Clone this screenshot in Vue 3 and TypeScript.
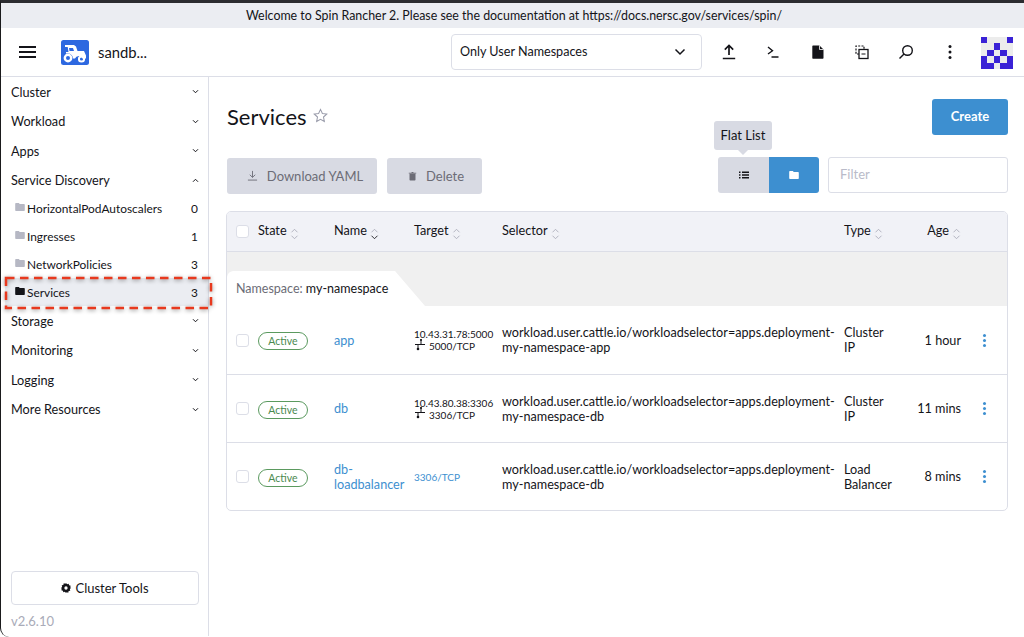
<template>
  <div class="page">
    <div class="banner">Welcome to Spin Rancher 2. Please see the documentation at https://docs.nersc.gov/services/spin/</div>

    <header class="topbar">
      <button class="burger" aria-label="Menu"><span></span><span></span><span></span></button>
      <svg class="cluster-logo" viewBox="0 0 28 25" width="28" height="25">
        <rect width="28" height="25" rx="2.5" fill="#2d68e0" />
        <path d="M4 5h9l2 1.5 1.5 4.5h6.5l2 4.5v3h-3.500a4 4 0 0 0-7.500 0h-2a5.500 5.500 0 0 0-7-5V12h2.500l-.8-5H4z" fill="#fff" />
        <path d="M8 8l.5 3h4.500l-1-3z" fill="#2d68e0" />
        <circle cx="7" cy="18" r="3.200" fill="none" stroke="#fff" stroke-width="2.400" />
        <circle cx="20.500" cy="19" r="2.600" fill="none" stroke="#fff" stroke-width="2" />
      </svg>
      <span class="cluster-name">sandb...</span>

      <div class="ns-select">
        <span class="ns-text">Only User Namespaces</span>
        <svg viewBox="0 0 12 8" width="12" height="8"><path d="M1.500 1.500 6 6l4.500-4.500" fill="none" stroke="#141419" stroke-width="1.500" /></svg>
      </div>

      <div class="tools">
        <svg viewBox="0 0 16 16" width="16" height="16"><path d="M8 11V1.500M3.800 5.600 8 1.500l4.200 4.100M1.800 14.500h12.400" fill="none" stroke="#141419" stroke-width="1.700" /></svg>
        <svg viewBox="0 0 16 16" width="16" height="16"><path d="M3 3l4.500 3.700L3 10M6.500 13h7" fill="none" stroke="#141419" stroke-width="1.400" /></svg>
        <svg viewBox="0 0 16 16" width="16" height="16"><path d="M3 1.500h6.500L13.500 5.500v8.500a.7.7 0 0 1-.7.7H3a.7.7 0 0 1-.7-.7V2.200A.7.7 0 0 1 3 1.500z" fill="#141419" /><path d="M9.500 1.500v4h4" fill="none" stroke="#fff" stroke-width=".8" /></svg>
        <svg viewBox="0 0 16 16" width="16" height="16"><path d="M5 10H2V2h8v3" fill="none" stroke="#141419" stroke-width="1.200" stroke-dasharray="2 1.300" /><rect x="5" y="5.500" width="9" height="9" fill="none" stroke="#141419" stroke-width="1.300" /><path d="M7.500 10h4" stroke="#141419" stroke-width="1.200" /></svg>
        <svg viewBox="0 0 16 16" width="16" height="16"><circle cx="9.500" cy="6.500" r="4.800" fill="none" stroke="#141419" stroke-width="1.400" /><path d="M6 10 1.500 14.500" stroke="#141419" stroke-width="1.500" /></svg>
        <svg viewBox="0 0 16 16" width="16" height="16"><circle cx="8" cy="2.500" r="1.500" fill="#141419" /><circle cx="8" cy="8" r="1.500" fill="#141419" /><circle cx="8" cy="13.500" r="1.500" fill="#141419" /></svg>
      </div>

      <svg class="avatar" viewBox="0 0 5 5" width="32" height="32" shape-rendering="crispEdges">
        <rect width="5" height="5" fill="#ececec" />
        <rect v-for="c in avatarCells" :key="c[0] + '-' + c[1]" :x="c[0]" :y="c[1]" width="1" height="1" fill="#3a22d6" />
      </svg>
    </header>

    <div class="body">
      <aside class="side">
        <nav class="groups">
          <template v-for="g in menu" :key="g.name">
            <div class="group-head">
              <span>{{ g.name }}</span>
              <svg viewBox="0 0 8 6" width="7" height="5"><path :d="g.items ? 'M1 4.500 4 1.500l3 3' : 'M1 1.500l3 3 3-3'" fill="none" stroke="#141419" stroke-width="1.200" /></svg>
            </div>
            <div v-for="it in g.items" :key="it.name" class="sub" :class="{ current: it.current }">
              <svg viewBox="0 0 12 10" width="10" height="8"><path d="M0 1a1 1 0 0 1 1-1h3.500l1.200 1.300H11a1 1 0 0 1 1 1V9a1 1 0 0 1-1 1H1a1 1 0 0 1-1-1z" :fill="it.current ? '#141419' : '#b6b8c4'" /></svg>
              <span class="sub-name">{{ it.name }}</span>
              <span class="sub-count">{{ it.count }}</span>
            </div>
          </template>
        </nav>
        <div class="side-foot">
          <button class="tools-btn">
            <svg viewBox="0 0 12 12" width="10" height="10"><path d="M6 0l1.300 1.400 1.900-.5.500 1.900 1.900.5-.5 1.900L12 6l-1.400 1.300.5 1.900-1.900.5-.5 1.900-1.900-.5L6 12l-1.300-1.400-1.900.5-.5-1.900-1.900-.5.5-1.900L0 6l1.400-1.300-.5-1.900 1.900-.5.5-1.900 1.900.5z" fill="#141419" /><circle cx="6" cy="6" r="2" fill="#fff" /></svg>
            Cluster Tools
          </button>
          <div class="version">v2.6.10</div>
        </div>
      </aside>

      <main class="main">
        <div class="title-row">
          <h1>Services</h1>
          <svg class="star" viewBox="0 0 16 16" width="15" height="15"><path d="M8 1.500l2 4.300 4.700.6-3.500 3.200.9 4.700L8 12l-4.100 2.300.9-4.700L1.300 6.400 6 5.800z" fill="none" stroke="#9a9cab" stroke-width="1.100" /></svg>
          <button class="create">Create</button>
        </div>

        <div class="actions-row">
          <button class="bulk">
            <svg viewBox="0 0 12 12" width="11" height="11"><path d="M6 1v7M3 5.200 6 8l3-2.800M1 11h10" fill="none" stroke="#6c6c76" stroke-width="1" /></svg>
            Download YAML
          </button>
          <button class="bulk delete">
            <svg viewBox="0 0 12 12" width="9" height="10"><path d="M2 3h8v8a1 1 0 0 1-1 1H3a1 1 0 0 1-1-1zM1 1.500h3.500L5 .500h2l.5 1H11v1H1z" fill="#6c6c76" /></svg>
            Delete
          </button>
          <div class="view-toggle">
            <div class="tooltip">Flat List</div>
            <button class="toggle-list">
              <svg viewBox="0 0 10 8" width="10" height="8"><path d="M0 .500h1.500v1.500H0zM3 .500h7v1.500H3zM0 3.200h1.500v1.500H0zM3 3.200h7v1.500H3zM0 6h1.500v1.500H0zM3 6h7v1.500H3z" fill="#141419" /></svg>
            </button>
            <button class="toggle-folder">
              <svg viewBox="0 0 12 10" width="10" height="8"><path d="M0 1a1 1 0 0 1 1-1h3.500l1.200 1.300H11a1 1 0 0 1 1 1V9a1 1 0 0 1-1 1H1a1 1 0 0 1-1-1z" fill="#fff" /></svg>
            </button>
          </div>
          <input class="filter" type="text" placeholder="Filter" />
        </div>

        <div class="table-box">
          <table>
            <colgroup>
              <col style="width: 31px" />
              <col style="width: 76px" />
              <col style="width: 80px" />
              <col style="width: 88px" />
              <col style="width: 342px" />
              <col style="width: 72px" />
              <col style="width: 50px" />
              <col />
            </colgroup>
            <thead>
              <tr>
                <th class="check-cell"><span class="check"></span></th>
                <th v-for="h in headers" :key="h.label" :class="{ right: h.label === 'Age' }">
                  <span class="th-label">{{ h.label }}</span>
                  <svg class="sort" viewBox="0 0 10 14" width="9" height="12">
                    <path d="M1.500 5 5 1.500 8.500 5" fill="none" stroke="#a8aab8" stroke-width="1" />
                    <path d="M1.500 9 5 12.500 8.500 9" fill="none" :stroke="h.active ? '#141419' : '#a8aab8'" stroke-width="1" />
                  </svg>
                </th>
                <th></th>
              </tr>
            </thead>
            <tbody>
              <tr class="group-row">
                <td colspan="8">
                  <div class="ns-tab"><span class="ns-label">Namespace:</span> my-namespace</div>
                </td>
              </tr>
              <tr v-for="s in services" :key="s.name" class="svc">
                <td class="check-cell"><span class="check"></span></td>
                <td><span class="badge">Active</span></td>
                <td><a class="link">{{ s.name }}</a></td>
                <td class="target">
                  <template v-if="s.ip">
                    <div>{{ s.ip }}</div>
                    <div class="port">
                      <svg viewBox="0 0 10 12" width="10" height="12"><path d="M6 0v5M0 5.500h10M3 5.500V10" fill="none" stroke="#141419" stroke-width="1" /><circle cx="6" cy="1" r="1" fill="#141419" /><circle cx="3" cy="10" r="1.300" fill="#141419" /></svg>
                      {{ s.port }}
                    </div>
                  </template>
                  <a v-else class="link">{{ s.port }}</a>
                </td>
                <td class="selector">{{ s.selector }}</td>
                <td class="type">{{ s.type }}</td>
                <td class="right">{{ s.age }}</td>
                <td class="dots"><span></span><span></span><span></span></td>
              </tr>
            </tbody>
          </table>
        </div>
      </main>
    </div>

    <!-- anotacion roja sobre la captura -->
    <svg class="callout" viewBox="0 0 214 38" width="214" height="38">
      <rect x="4" y="4" width="205" height="30" fill="none" stroke="#e8391e" stroke-width="2.500" stroke-dasharray="8.500 5.500" />
    </svg>
  </div>
</template>

<script setup lang="ts">
interface SubItem {
  name: string;
  count: number;
  current?: boolean;
}

const menu: { name: string; items?: SubItem[] }[] = [
  { name: 'Cluster' },
  { name: 'Workload' },
  { name: 'Apps' },
  {
    name: 'Service Discovery',
    items: [
      { name: 'HorizontalPodAutoscalers', count: 0 },
      { name: 'Ingresses', count: 1 },
      { name: 'NetworkPolicies', count: 3 },
      { name: 'Services', count: 3, current: true }
    ]
  },
  { name: 'Storage' },
  { name: 'Monitoring' },
  { name: 'Logging' },
  { name: 'More Resources' }
];

const headers = [
  { label: 'State' },
  { label: 'Name', active: true },
  { label: 'Target' },
  { label: 'Selector' },
  { label: 'Type' },
  { label: 'Age' }
];

const services = [
  {
    name: 'app',
    ip: '10.43.31.78:5000',
    port: '5000/TCP',
    selector: 'workload.user.cattle.io/workloadselector=apps.deployment-my-namespace-app',
    type: 'Cluster IP',
    age: '1 hour'
  },
  {
    name: 'db',
    ip: '10.43.80.38:3306',
    port: '3306/TCP',
    selector: 'workload.user.cattle.io/workloadselector=apps.deployment-my-namespace-db',
    type: 'Cluster IP',
    age: '11 mins'
  },
  {
    name: 'db-loadbalancer',
    ip: '',
    port: '3306/TCP',
    selector: 'workload.user.cattle.io/workloadselector=apps.deployment-my-namespace-db',
    type: 'Load Balancer',
    age: '8 mins'
  }
];

const avatarCells = [
  [0, 0], [4, 0],
  [2, 1],
  [1, 2], [3, 2],
  [0, 3], [2, 3], [4, 3],
  [0, 4], [1, 4], [3, 4], [4, 4]
];
</script>

<style>
html,
body {
  margin: 0;
  background: #fff;
}
</style>

<style scoped>
.page {
  position: relative;
  height: 637px;
  overflow: hidden;
  box-sizing: border-box;
  border-top: 3px solid #2b2c30;
  border-left: 1.500px solid #1a1a1c;
  border-bottom-left-radius: 9px;
  font-family: Lato, "Liberation Sans", sans-serif;
  font-size: 12.700px;
  color: #141419;
  background: #fff;
}

.banner {
  height: 25px;
  line-height: 25px;
  text-align: center;
  padding-left: 3px;
  background: #ebedf2;
  font-size: 12.400px;
}

.topbar {
  height: 49px;
  box-sizing: border-box;
  border-bottom: 1px solid #dcdee7;
  display: flex;
  align-items: center;
}

.burger {
  border: 0;
  background: none;
  padding: 0;
  margin-left: 18px;
  width: 17px;
  display: flex;
  flex-direction: column;
  gap: 3px;
}

.burger span {
  height: 2px;
  background: #141419;
}

.cluster-logo {
  margin-left: 25px;
}

.cluster-name {
  margin-left: 9px;
  font-size: 14.800px;
  width: 353px;
}

.ns-select {
  width: 251px;
  height: 36px;
  box-sizing: border-box;
  border: 1px solid #dcdee7;
  border-radius: 4px;
  padding: 0 15px 0 8px;
  display: flex;
  align-items: center;
  justify-content: space-between;
  font-size: 12.600px;
}

.ns-text {
  margin-bottom: 2px;
}

.tools {
  margin-left: 19px;
  display: flex;
  gap: 28.300px;
}

.avatar {
  margin-left: 23px;
  margin-top: 2px;
}

.body {
  display: flex;
  height: 559px;
}

.side {
  width: 208px;
  box-sizing: border-box;
  border-right: 1px solid #dcdee7;
  display: flex;
  flex-direction: column;
  justify-content: space-between;
  flex-shrink: 0;
}

.groups {
  padding-top: 0;
}

.group-head {
  height: 29.500px;
  padding: 0 9px 0 10px;
  display: flex;
  align-items: center;
  justify-content: space-between;
}

.sub {
  height: 27.750px;
  margin: 0 0 0 4px;
  padding: 0 10px 0 10px;
  display: flex;
  align-items: center;
  font-size: 11.900px;
}

.sub svg {
  margin-right: 2px;
  margin-top: -3px;
}

.sub.current {
  background: #ebedf2;
}

.sub-name {
  flex: 1;
}

.side-foot {
  padding: 0 9px 7px 10px;
}

.tools-btn {
  width: 100%;
  height: 34px;
  border: 1px solid #dcdee7;
  border-radius: 4px;
  background: #fff;
  font: inherit;
  font-size: 13px;
  color: inherit;
  display: flex;
  align-items: center;
  justify-content: center;
  gap: 4px;
}

.version {
  margin-top: 8px;
  color: #a9abb8;
  font-size: 13px;
  line-height: 16px;
}

.main {
  flex: 1;
  padding: 0 16px 0 18px;
  min-width: 0;
}

.title-row {
  height: 80px;
  display: flex;
  align-items: flex-start;
}

.title-row h1 {
  margin: 25px 0 0;
  font-size: 22px;
  line-height: 30px;
  font-weight: 400;
}

.star {
  margin: 31px 0 0 6px;
}

.create {
  margin: 22px 0 0 auto;
  width: 76px;
  height: 36px;
  border: 0;
  border-radius: 3px;
  padding: 0 0 2px;
  background: #3d8fd0;
  color: #fff;
  font: inherit;
  font-size: 13px;
  font-weight: 700;
}

.actions-row {
  height: 36px;
  display: flex;
  align-items: center;
}

.bulk {
  height: 36px;
  width: 150px;
  margin-top: 2px;
  border: 0;
  border-radius: 3px;
  padding: 0 0 1px 6px;
  background: #d8dae3;
  color: #6c6c76;
  font: inherit;
  font-size: 13px;
  display: flex;
  align-items: center;
  justify-content: center;
  gap: 9px;
}

.bulk.delete {
  width: 95px;
  margin-left: 10px;
  padding-left: 3px;
}

.view-toggle {
  position: relative;
  margin-left: auto;
  display: flex;
}

.view-toggle button {
  width: 51px;
  height: 36px;
  border: 0;
  padding: 0;
  display: flex;
  align-items: center;
  justify-content: center;
}

.toggle-list {
  background: #d8dae3;
  border-radius: 3px 0 0 3px;
}

.view-toggle .toggle-folder {
  width: 50px;
  background: #3d8fd0;
  border-radius: 0 3px 3px 0;
}

.tooltip {
  position: absolute;
  left: -4px;
  top: -36px;
  width: 58px;
  height: 29px;
  line-height: 29px;
  text-align: center;
  background: #d8dae3;
  border-radius: 3px;
  font-size: 13px;
}

.tooltip::after {
  content: "";
  position: absolute;
  left: 24px;
  bottom: -5px;
  border: 5px solid transparent;
  border-top-color: #d8dae3;
  border-bottom: 0;
}

.filter {
  margin-left: 9px;
  width: 180px;
  height: 36px;
  box-sizing: border-box;
  border: 1px solid #dcdee7;
  border-radius: 3px;
  padding: 0 11px 2px;
  font: inherit;
  font-size: 13px;
  outline: none;
}

.filter::placeholder {
  color: #b9bbc9;
}

.table-box {
  margin: 18px 0 0 -1px;
  border: 1px solid #dcdee7;
  border-radius: 5px;
  overflow: hidden;
}

table {
  width: 100%;
  border-collapse: collapse;
  table-layout: fixed;
}

th {
  height: 39px;
  padding: 0;
  background: #f1f2f7;
  border-bottom: 1px solid #dcdee7;
  font-weight: 400;
  text-align: left;
  font-size: 12.700px;
}

.th-label {
  position: relative;
  top: -2px;
}

th.right,
.svc td.right {
  text-align: right;
  padding-right: 5px;
}

.sort {
  vertical-align: -3px;
  margin-left: 3px;
}

th.check-cell,
.svc td.check-cell {
  padding-left: 9px;
}

.check {
  display: block;
  width: 11px;
  height: 11px;
  border: 1px solid #dcdee7;
  border-radius: 3px;
  background: #fff;
}

.group-row td {
  height: 54px;
  padding: 0;
  background: #f0f0f0;
  vertical-align: bottom;
}

.ns-tab {
  width: 198px;
  height: 35px;
  line-height: 35px;
  padding-left: 9px;
  box-sizing: border-box;
  background: #fff;
  clip-path: polygon(0 6px, 1px 3px, 3px 1px, 6px 0, 168px 0, 198px 100%, 0 100%);
  font-size: 12.500px;
}

.ns-label {
  color: #6c6c76;
}

.svc td {
  height: 67px;
  padding: 0;
  border-top: 1px solid #dcdee7;
  font-size: 12.650px;
  line-height: 15px;
}

.group-row + .svc td {
  height: 68px;
  border-top: 0;
}

.badge {
  display: inline-block;
  width: 50px;
  height: 18px;
  box-sizing: border-box;
  border: 1px solid #5b9a5f;
  border-radius: 9px;
  text-align: center;
  font-size: 10.500px;
  line-height: 16px;
  color: #4b8a50;
  vertical-align: middle;
  margin-top: 2px;
}

.link {
  color: #3d8fd0;
}

.svc td.target {
  font-size: 10px;
  line-height: 12px;
}

.port {
  display: flex;
  align-items: center;
  gap: 4px;
  padding-left: 1px;
}

.port svg {
  margin-top: -3px;
}

.svc td.selector {
  padding-right: 6px;
  overflow-wrap: anywhere;
}

.svc td.type {
  padding-right: 20px;
}

.svc td.dots {
  padding-left: 17px;
}

.dots span {
  display: block;
  width: 3px;
  height: 3px;
  margin: 2px 0;
  border-radius: 50%;
  background: #3d8fd0;
}

.callout {
  position: absolute;
  left: 1px;
  top: 271px;
  filter: drop-shadow(0 1px 2px rgba(0, 0, 0, 0.45));
}
</style>
